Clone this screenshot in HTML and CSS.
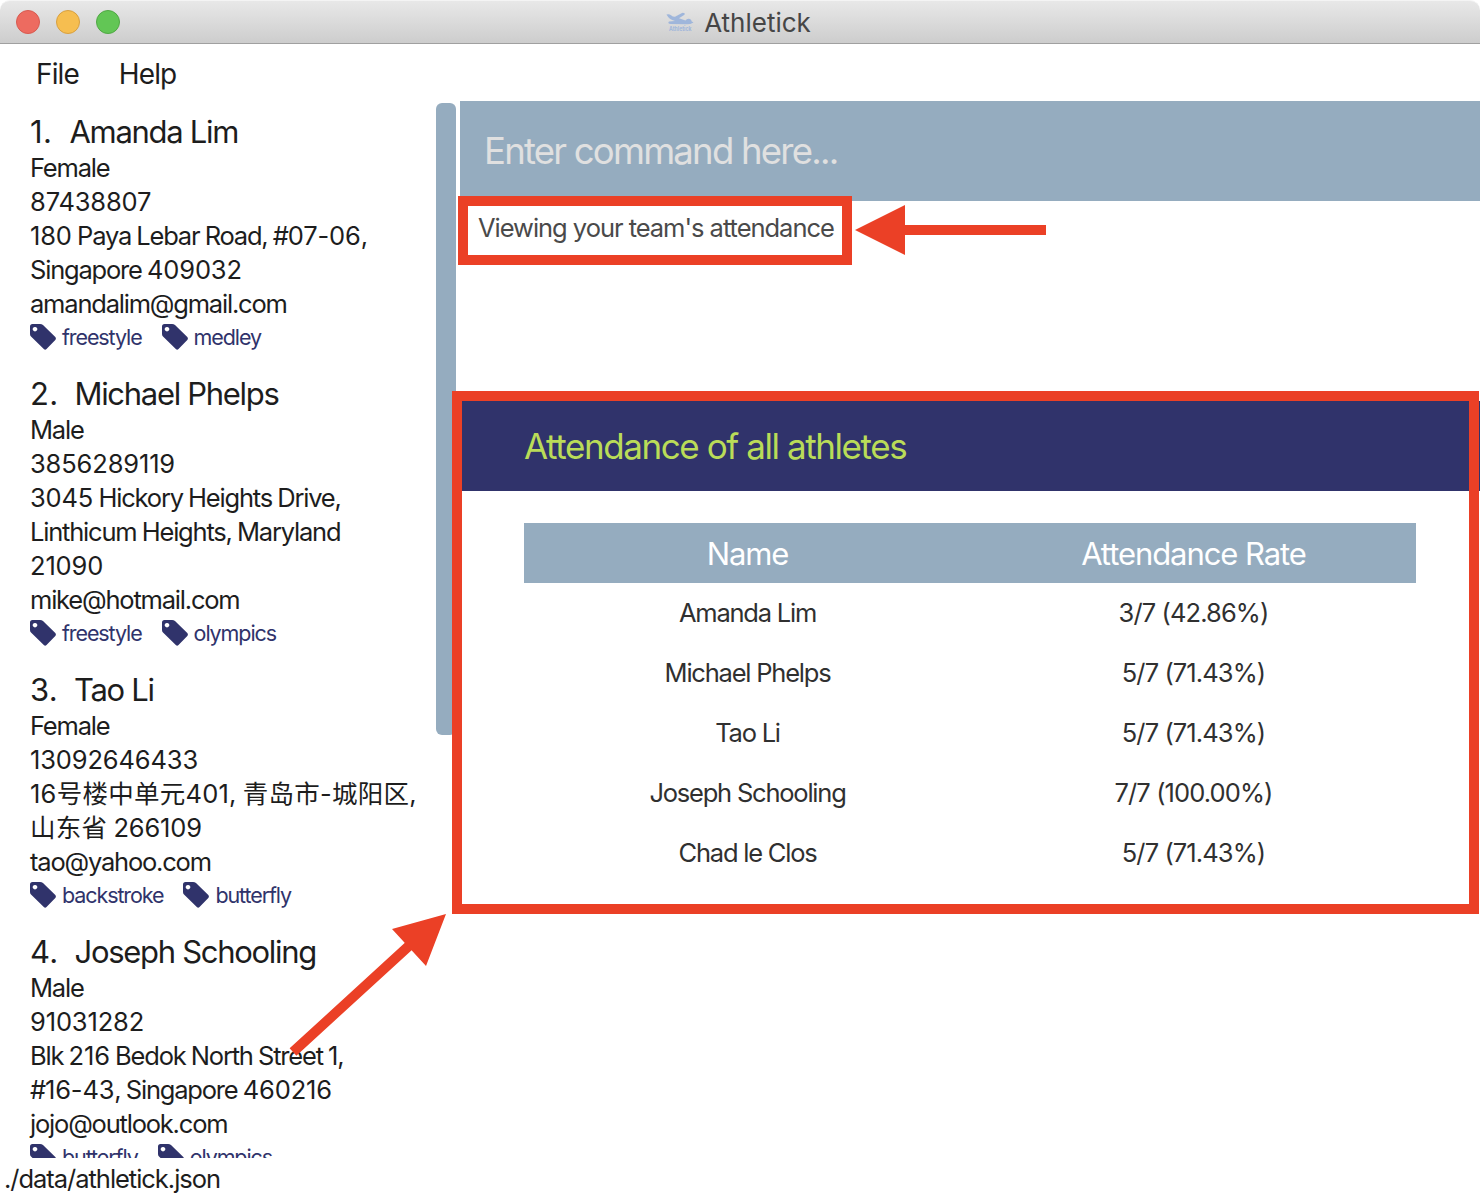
FILE: index.html
```html
<!DOCTYPE html>
<html lang="en">
<head>
<meta charset="utf-8">
<title>Athletick</title>
<link rel="stylesheet" href="styles.css">
</head>
<body>
<svg width="0" height="0" class="defs">
  <symbol id="tag" viewBox="0 0 26 26"><path fill-rule="evenodd" d="M2.500 0H10Q11.800 0 13 1L25.300 13Q26.500 14.500 25.300 16L16.500 25Q15.200 26.500 13.800 25L1 12.500Q0 11.500 0 10V2.500Q0 0 2.500 0ZM5 2.900a2.300 2.300 0 1 0 .01 0Z"/></symbol>
</svg>
<div class="window">
  <header class="titlebar">
    <div class="lights"><i class="light red"></i><i class="light yellow"></i><i class="light green"></i></div>
    <div class="title">
      <svg class="logo" viewBox="0 0 28 20"><path d="M.5 2.500Q3 1.500 5 3.200Q7 5 9 4.800L16 .9Q19.500 .5 18.500 2.800L13 6.300L19.500 8.500Q21 6 24 7Q26 8.500 25.500 9.300L27.500 10.500Q24 12.600 20 12.300L5 12Q1 11.500 3 9.500L9 9Q3 7.500 .5 2.500Z"/><text x="3" y="18.600" textLength="22.500" lengthAdjust="spacingAndGlyphs">Athletick</text></svg>
      <span>Athletick</span>
    </div>
  </header>
  <nav class="menu"><span>File</span><span>Help</span></nav>
  <main class="content">
    <section class="people">
      <div class="list">
        <article class="card">
          <h2><span class="index">1.</span><span>Amanda Lim</span></h2>
          <p>Female</p><p class="num">87438807</p><p><span class="num">180</span> Paya Lebar Road, #<span class="num">07-06</span>,</p><p>Singapore <span class="num">409032</span></p><p>amandalim@gmail.com</p>
          <div class="tags"><span class="tag"><svg><use href="#tag"/></svg>freestyle</span><span class="tag"><svg><use href="#tag"/></svg>medley</span></div>
        </article>
        <article class="card">
          <h2><span class="index">2.</span><span>Michael Phelps</span></h2>
          <p>Male</p><p class="num">3856289119</p><p><span class="num">3045</span> Hickory Heights Drive,</p><p>Linthicum Heights, Maryland</p><p class="num">21090</p><p>mike@hotmail.com</p>
          <div class="tags"><span class="tag"><svg><use href="#tag"/></svg>freestyle</span><span class="tag"><svg><use href="#tag"/></svg>olympics</span></div>
        </article>
        <article class="card">
          <h2><span class="index">3.</span><span>Tao Li</span></h2>
          <p>Female</p><p class="num">13092646433</p><p class="han">16号楼中单元401, 青岛市-城阳区,</p><p class="han">山东省 <span class="num">266109</span></p><p>tao@yahoo.com</p>
          <div class="tags"><span class="tag"><svg><use href="#tag"/></svg>backstroke</span><span class="tag"><svg><use href="#tag"/></svg>butterfly</span></div>
        </article>
        <article class="card">
          <h2><span class="index">4.</span><span>Joseph Schooling</span></h2>
          <p>Male</p><p class="num">91031282</p><p>Blk <span class="num">216</span> Bedok North Street 1,</p><p>#<span class="num">16-43</span>, Singapore <span class="num">460216</span></p><p>jojo@outlook.com</p>
          <div class="tags"><span class="tag"><svg><use href="#tag"/></svg>butterfly</span><span class="tag"><svg><use href="#tag"/></svg>olympics</span></div>
        </article>
      </div>
      <div class="scrollbar"></div>
    </section>
    <section class="main">
      <div class="command">Enter command here...</div>
      <div class="result">Viewing your team's attendance</div>
      <div class="heading">Attendance of all athletes</div>
      <table class="attendance">
        <thead><tr><th>Name</th><th>Attendance Rate</th></tr></thead>
        <tbody>
          <tr><td>Amanda Lim</td><td class="rate">3/7 (42.86%)</td></tr>
          <tr><td>Michael Phelps</td><td class="rate">5/7 (71.43%)</td></tr>
          <tr><td>Tao Li</td><td class="rate">5/7 (71.43%)</td></tr>
          <tr><td>Joseph Schooling</td><td class="rate">7/7 (100.00%)</td></tr>
          <tr><td>Chad le Clos</td><td class="rate">5/7 (71.43%)</td></tr>
        </tbody>
      </table>
    </section>
  </main>
  <footer class="status">./data/athletick.json</footer>
  <svg class="annotations" viewBox="0 0 1480 1200">
    <rect x="463" y="201" width="384" height="59"/>
    <rect x="457" y="396" width="1017" height="513"/>
    <path d="M904 230H1046M293 1052L411 944"/>
    <path class="head" d="M855 230L905 205V255ZM446 914L392 929L426 966Z"/>
  </svg>
</div>
</body>
</html>
```
FILE: styles.css
```css
* { box-sizing: border-box; }
body { margin: 0; background: #fff; color: #1d1d1d; font-family: Inter, "Noto Sans CJK SC", sans-serif; }
h2, p { margin: 0; font-weight: 400; white-space: nowrap; }
.defs { position: absolute; }
.window { position: relative; width: 1480px; height: 1200px; overflow: hidden; display: flex; flex-direction: column; }
.titlebar { height: 44px; display: grid; grid-template-columns: 1fr auto 1fr; align-items: center; padding: 0 0 0 16px; background: linear-gradient(#e8e8e8, #cdcdcd); border-top: 1px solid #f4f4f4; border-bottom: 1px solid #a0a0a0; border-radius: 10px 10px 0 0; }
.lights { display: flex; gap: 16px; }
.light { width: 24px; height: 24px; border-radius: 50%; border: 1px solid; }
.red { background: #ed6b60; border-color: #d85a50; }
.yellow { background: #f6be50; border-color: #d8a040; }
.green { background: #62c655; border-color: #50a844; }
.title { display: flex; align-items: center; gap: 10px; margin-left: -19px; font-size: 26px; color: #464646; letter-spacing: 0; }
.logo { width: 28px; height: 20px; fill: #9fb6db; }
.logo text { font-size: 6.500px; font-weight: 700; letter-spacing: 0; }
.menu { height: 57px; display: flex; gap: 40px; align-items: center; padding: 2px 0 0 36px; font-size: 28px; letter-spacing: -.9px; }
.content { height: 1057px; display: flex; overflow: hidden; }
.people { width: 460px; display: flex; }
.list { width: 436px; padding: 12px 0 0 30px; }
.card { margin-bottom: 22px; font-size: 25.500px; letter-spacing: -1.200px; }
.card h2 { height: 38px; line-height: 38px; font-size: 31px; letter-spacing: -1.300px; display: flex; gap: 16px; }
.card .index { min-width: 23.500px; letter-spacing: .3px; }
.card p { height: 34px; line-height: 34px; word-spacing: -.7px; }
.card .num { letter-spacing: -.15px; }
.card .han { letter-spacing: .25px; word-spacing: -1.300px; }
.tags { height: 32px; display: flex; gap: 20px; align-items: center; font-size: 21.500px; letter-spacing: -1.100px; color: #30336b; }
.tag { display: flex; align-items: center; gap: 6px; }
.tag svg { width: 26px; height: 26px; fill: #30336b; }
.scrollbar { width: 20px; height: 632px; margin-top: 2px; border-radius: 6px; background: #95acbf; }
.main { width: 1020px; display: flex; flex-direction: column; }
.command { height: 100px; line-height: 100px; padding-left: 24px; background: #95acbf; color: #e0e0e0; font-size: 36.500px; letter-spacing: -1.770px; }
.result { height: 200px; padding: 10px 0 0 18px; line-height: 34px; font-size: 25.500px; letter-spacing: -1.030px; color: #4a4a4a; }
.heading { height: 90px; line-height: 90px; padding-left: 64px; background: #30336b; color: #badc58; font-size: 35px; letter-spacing: -1.420px; }
.attendance { width: 892px; margin: 32px 0 0 64px; table-layout: fixed; border-collapse: collapse; text-align: center; }
.attendance th, .attendance td { height: 60px; padding: 0 0 0 1px; }
.attendance th { background: #95acbf; color: #fff; font-size: 31px; font-weight: 400; letter-spacing: -1.070px; }
.attendance td { padding-bottom: 2px; font-size: 25.500px; letter-spacing: -1.220px; color: #303030; }
.attendance .rate { letter-spacing: -.9px; }
.status { height: 42px; line-height: 42px; padding-left: 4px; font-size: 25.500px; letter-spacing: -1.030px; }
.annotations { position: absolute; inset: 0; width: 1480px; height: 1200px; fill: none; stroke: #eb4026; stroke-width: 10; pointer-events: none; }
.annotations .head { fill: #eb4026; stroke: none; }
```
